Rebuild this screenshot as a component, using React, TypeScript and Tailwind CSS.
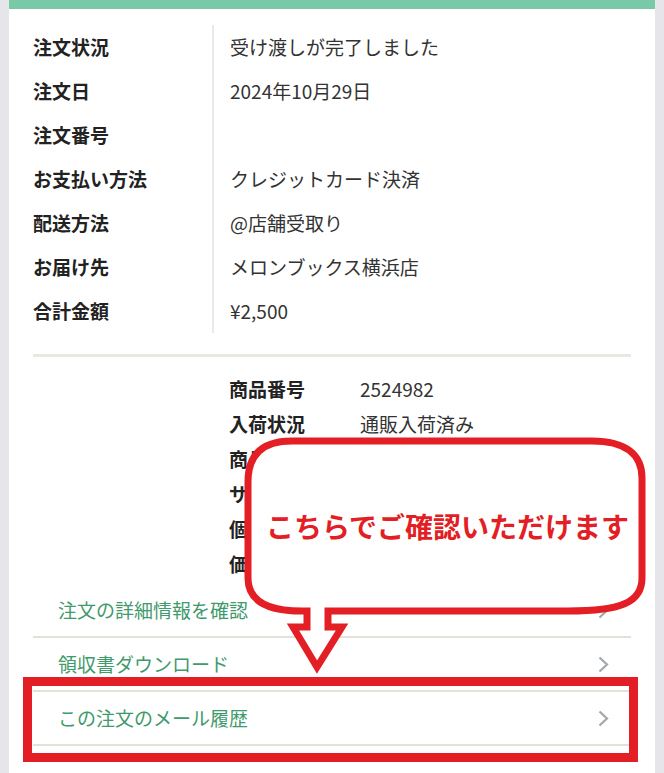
import React from "react";

const orderRows: [string, string][] = [
  ["注文状況", "受け渡しが完了しました"],
  ["注文日", "2024年10月29日"],
  ["注文番号", ""],
  ["お支払い方法", "クレジットカード決済"],
  ["配送方法", "@店舗受取り"],
  ["お届け先", "メロンブックス横浜店"],
  ["合計金額", "¥2,500"],
];

// rows 3-6 sit under the callout, so their values stay empty
const itemRows: [string, string][] = [
  ["商品番号", "2524982"],
  ["入荷状況", "通販入荷済み"],
  ["商品名", ""],
  ["サークル", ""],
  ["個数", ""],
  ["価格", ""],
];

const links = ["注文の詳細情報を確認", "領収書ダウンロード", "この注文のメール履歴"];

const Chevron = () => (
  <svg width="11" height="17" viewBox="0 0 11 17" fill="none">
    <polyline points="1.5,1.5 9,8.5 1.5,15.5" stroke="#a3a7ab" strokeWidth="2.2" />
  </svg>
);

export default function App() {
  return (
    <div className="relative min-h-[773px] w-[664px] overflow-hidden bg-[#e5e5ea] font-['Noto_Sans_CJK_JP',sans-serif]">
      <div className="mx-[9px] min-h-[773px] bg-white">
        <div className="h-[9px] bg-[#77c9a8]" />

        <div className="px-[24px] pt-[16px]">
          {/* order summary */}
          <div className="flex">
            <div className="w-[179px]">
              {orderRows.map(([label]) => (
                <div key={label} className="flex h-[44px] items-center text-[19px] font-bold text-[#222]">
                  {label}
                </div>
              ))}
            </div>
            <div className="flex-1 border-l-2 border-[#ebebe6] pl-[16px]">
              {orderRows.map(([label, value]) => (
                <div key={label} className="flex h-[44px] items-center text-[19px] text-[#333]">
                  {value}
                </div>
              ))}
            </div>
          </div>

          <div className="mt-[21px] h-[3px] bg-[#e9e9df]" />

          {/* item */}
          <div className="mt-[15px] pl-[196px]">
            {itemRows.map(([label, value]) => (
              <div key={label} className="flex h-[35px] items-center text-[19px]">
                <span className="w-[131px] font-bold text-[#222]">{label}</span>
                <span className="text-[#333]">{value}</span>
              </div>
            ))}
          </div>

          {/* links */}
          <div className="mt-[2px]">
            {links.map((l) => (
              <div
                key={l}
                className="flex h-[54px] items-center justify-between border-b-2 border-[#e2e2da] pl-[25px] pr-[22px]"
              >
                <span className="text-[19px] text-[#3f9a6c]">{l}</span>
                <Chevron />
              </div>
            ))}
          </div>
        </div>
      </div>

      {/* annotation: speech bubble */}
      <svg className="pointer-events-none absolute left-0 top-0" width="664" height="773" viewBox="0 0 664 773">
        <path
          d="M248 482 C248 455 262 441 292 441 L592 441 C626 441 642 455 642 478 L642 578 C642 602 622 611 568 611 L328 611 L328 627 L342 627 L317 667 L293 627 L307 627 L307 611 L302 611 C266 611 248 600 248 578 Z"
          fill="white"
          stroke="#e31e24"
          strokeWidth="7"
          strokeLinejoin="miter"
        />
      </svg>
      <div className="absolute left-[245px] top-[437px] flex h-[178px] w-[401px] items-center justify-center pl-[4px]">
        <span className="text-[28px] font-bold text-[#e31e24]">こちらでご確認いただけます</span>
      </div>

      {/* annotation: highlight box */}
      <div className="absolute left-[23px] top-[677px] h-[85px] w-[615px] border-[9px] border-[#e31e24]" />
    </div>
  );
}
